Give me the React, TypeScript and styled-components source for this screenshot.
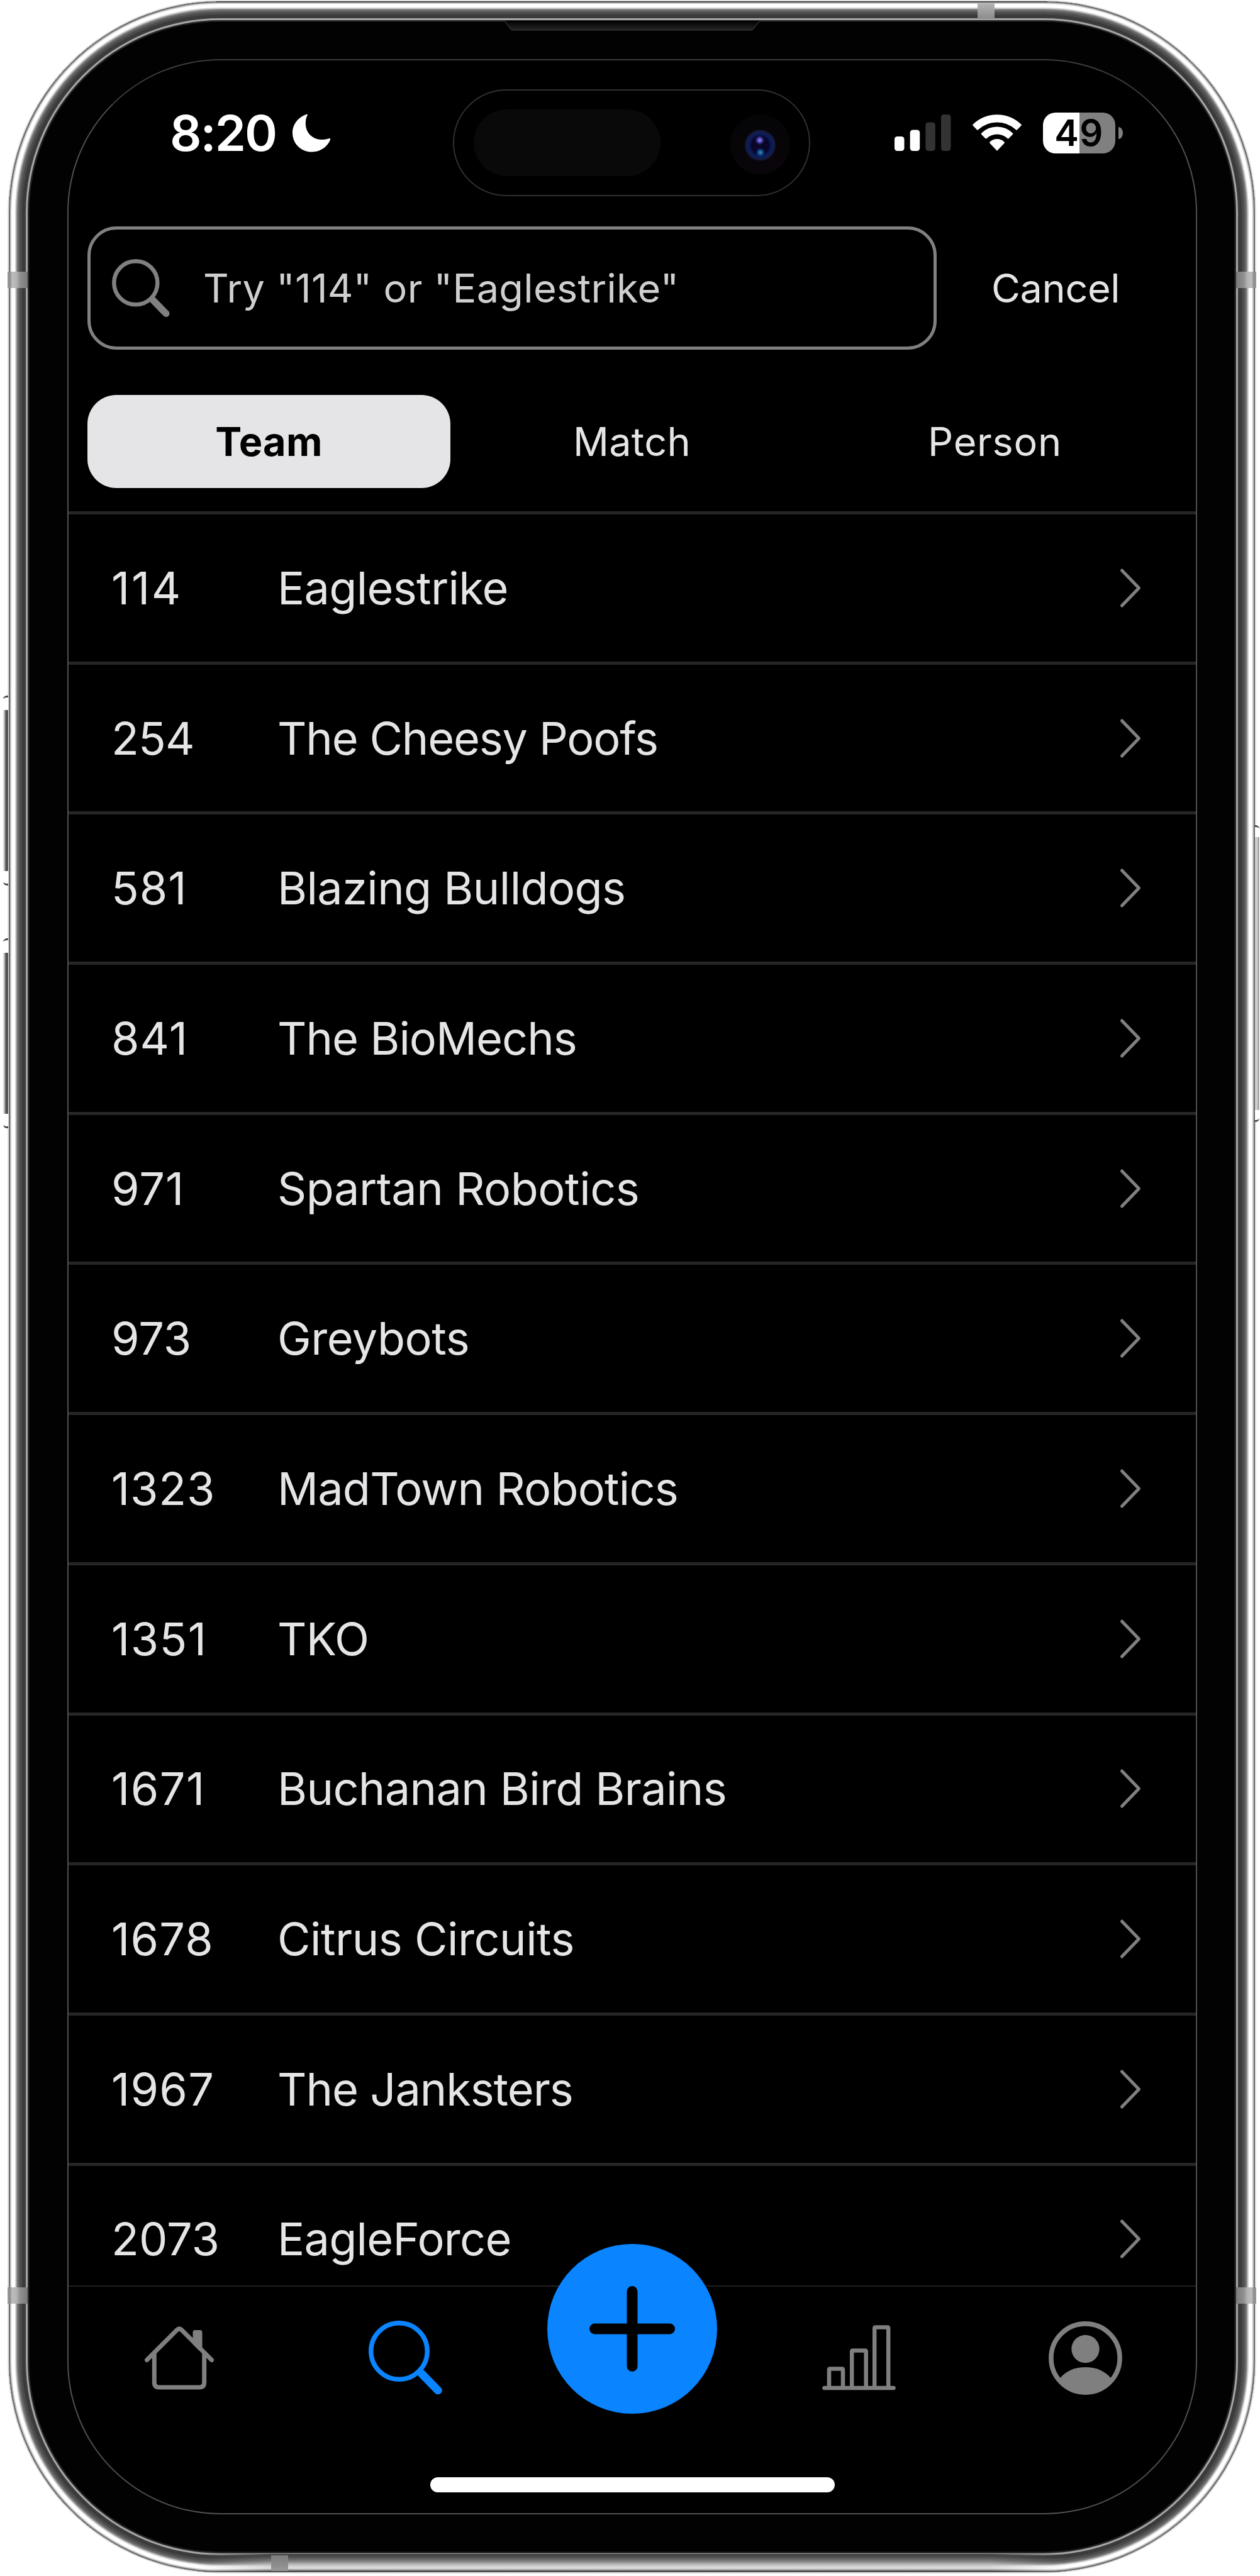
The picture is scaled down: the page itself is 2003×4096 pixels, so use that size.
import React from 'react';
import styled, { createGlobalStyle, css } from 'styled-components';

const GlobalStyle = createGlobalStyle`
  *, *::before, *::after { box-sizing: border-box; }
  body {
    margin: 0;
    background: #fff;
    font-family: Inter, "Liberation Sans", sans-serif;
  }
`;

const ink = '#e5e5e7';
const muted = '#808080';
const hairline = '#262628';
const accent = '#0a84ff';

/* ---------- Device ---------- */

const Page = styled.div`
  width: 2003px;
  height: 4096px;
  padding: 2px 8px 6px 14px;
  overflow: hidden;
  background: #fff;
`;

const Device = styled.div`
  position: relative;
  width: 1981px;
  height: 4088px;
  padding: 92px 92px 92px 93px;
  border-radius: 336px;
  background: #020202;
  box-shadow:
    0 0 0 2px #e2e2e2,
    inset 0 0 0 2px #6a6a6a,
    inset 0 0 0 4px #c6c6c6,
    inset 0 0 0 10px #ffffff,
    inset 0 0 0 12px #cfcfcf,
    inset 0 0 0 14px #8a8a8a,
    inset 0 0 0 17px #646464,
    inset 0 0 0 21px #4c4c4c,
    inset 0 0 0 27px #3b3b3b,
    inset 0 0 0 30px #a6a6a6,
    inset 0 0 0 32px #2a2a2a,
    inset 0 0 0 33px #141414;
`;

const BottomShade = styled.div`
  position: absolute;
  left: 300px;
  right: 300px;
  bottom: 0;
  height: 29px;
  background: linear-gradient(to bottom, #3a3a3a 0, #505050 5px, #7c7c7c 11px, #b4b4b4 16px, #d6d6d6 20px, #dcdcdc 23px, #8a8a8a 26px, #4c4c4c 27px, #4c4c4c 29px);
  mask-image: linear-gradient(to right, transparent, #000 120px, #000 calc(100% - 120px), transparent);
`;

const TopShade = styled.div`
  position: absolute;
  left: 330px;
  right: 330px;
  top: 0;
  height: 2px;
  background: #444;
`;

const SideBand = styled.div<{ $side: 'left' | 'right'; $top: number }>`
  position: absolute;
  ${(p) => (p.$side === 'left' ? 'left: -2px;' : 'right: -2px;')}
  top: ${(p) => p.$top}px;
  width: 32px;
  height: 26px;
  background: linear-gradient(
    to ${(p) => (p.$side === 'left' ? 'right' : 'left')},
    #9a9a9a 0, #8c8c8c 4px, #bdbdbd 7px, #b4b4b4 14px, #8f8f8f 20px, #7a7a7a 100%
  );
`;

const EdgeBand = styled.div<{ $edge: 'top' | 'bottom'; $left: number }>`
  position: absolute;
  ${(p) => (p.$edge === 'top' ? 'top: 3px;' : 'bottom: 2px;')}
  left: ${(p) => p.$left}px;
  width: 27px;
  height: 25px;
  background: ${(p) => (p.$edge === 'top' ? 'linear-gradient(#b4b4b4, #8c8c8c)' : 'linear-gradient(#7c7c7c, #989898)')};
`;

const SideButton = styled.div<{ $side: 'left' | 'right'; $top: number; $height: number }>`
  position: absolute;
  top: ${(p) => p.$top}px;
  height: ${(p) => p.$height}px;
  border-top: 3px solid #4a4a4a;
  border-bottom: 3px solid #4a4a4a;
  ${(p) =>
    p.$side === 'left'
      ? css`
          left: -9px;
          width: 8px;
          border-radius: 6px 0 0 6px;
          background: linear-gradient(to right, #e2e2e2 0, #c4c4c4 2px, #5a5a5a 4px, #484848 7px, #8a8a8a 8px) 0 20px / 100% calc(100% - 40px) no-repeat, #fff;
        `
      : css`
          right: -7px;
          width: 7px;
          border-radius: 0 6px 6px 0;
          background: linear-gradient(to left, #d8d8d8 0, #9a9a9a 1px, #9a9a9a 2px, #cfcfcf 3px, #cfcfcf 7px) 0 16px / 100% calc(100% - 32px) no-repeat, #fff;
        `}
`;

const Speaker = styled.svg`
  position: absolute;
  top: 31px;
  left: 787px;
  width: 408px;
  height: 17px;
  display: block;
`;

/* ---------- Screen ---------- */

const Screen = styled.main`
  display: flex;
  flex-direction: column;
  width: 1796px;
  height: 3904px;
  overflow: hidden;
  border: 2px solid #505050;
  border-top-color: #3c3c3c;
  border-radius: 243px;
  background: #000;
  color: ${ink};
`;

const StatusBar = styled.header`
  display: grid;
  grid-template-columns: 611px 568px 1fr;
  align-items: start;
  flex: none;
  height: 264px;
  padding-top: 46px;
`;

const Clock = styled.div`
  display: flex;
  align-items: center;
  gap: 26px;
  height: 138px;
  padding-left: 161px;
  color: #fff;
  font-size: 79px;
  font-weight: 600;
  letter-spacing: -2px;
  line-height: 1;
`;

const Island = styled.div`
  display: flex;
  align-items: center;
  justify-content: space-between;
  height: 170px;
  padding: 0 30px 0 31px;
  border: 2px solid #303030;
  border-radius: 85px;
  background: #000;
`;

const Sensor = styled.div`
  width: 297px;
  height: 106px;
  border-radius: 53px;
  background: #090909;
`;

const StatusIcons = styled.div`
  display: flex;
  align-items: center;
  gap: 34px;
  height: 138px;
  padding-left: 134px;
`;

const Battery = styled.div`
  display: flex;
  align-items: center;
  gap: 5px;
`;

const BatteryBody = styled.div`
  display: flex;
  align-items: center;
  justify-content: center;
  width: 115px;
  height: 65px;
  border-radius: 20px;
  background: linear-gradient(to right, #fff 50%, #808080 50%);
  color: #000;
  font-size: 58px;
  font-weight: 600;
  letter-spacing: 1.5px;
  line-height: 1;
`;

const BatteryCap = styled.div`
  width: 7px;
  height: 19px;
  border-radius: 0 7px 7px 0 / 0 10px 10px 0;
  background: #808080;
`;

/* ---------- Search ---------- */

const SearchRow = styled.div`
  display: flex;
  flex: none;
  height: 196px;
  padding-left: 30px;
`;

const SearchField = styled.label`
  display: flex;
  align-items: center;
  width: 1350px;
  height: 196px;
  padding-left: 34px;
  border: 5px solid ${muted};
  border-radius: 46px;
`;

const Placeholder = styled.span`
  margin-left: 53px;
  color: #cfcfd1;
  font-size: 63px;
  letter-spacing: 0.33px;
  line-height: 1;
  white-space: nowrap;
`;

const Cancel = styled.button`
  margin: 0 0 0 87px;
  padding: 0;
  border: 0;
  background: none;
  color: ${ink};
  font: 400 63px/1 Inter, "Liberation Sans", sans-serif;
  letter-spacing: -0.4px;
`;

const Segments = styled.nav`
  display: flex;
  flex: none;
  height: 185px;
  margin-top: 72px;
  padding: 0 31px 37px 30px;
`;

const Segment = styled.button<{ $active?: boolean; $tracking: number }>`
  width: 577px;
  height: 148px;
  padding: 0;
  border: 0;
  border-radius: 46px;
  background: ${(p) => (p.$active ? ink : 'transparent')};
  color: ${(p) => (p.$active ? '#000' : ink)};
  font: ${(p) => (p.$active ? 700 : 400)} 63px/1 Inter, "Liberation Sans", sans-serif;
  letter-spacing: ${(p) => p.$tracking}px;
`;

/* ---------- Team list ---------- */

const TeamList = styled.ul`
  flex: 1;
  min-height: 0;
  margin: 0;
  padding: 0;
  overflow: hidden;
  list-style: none;
`;

const TeamRow = styled.li`
  display: grid;
  grid-template-columns: 264px 1fr 32px;
  align-items: center;
  height: 238.7px;
  padding: 0 88px 0 68px;
  border-top: 5px solid ${hairline};
  font-size: 72px;
  line-height: 1;
  white-space: nowrap;
`;

const Cell = styled.span<{ $tracking: number }>`
  letter-spacing: ${(p) => p.$tracking}px;
`;

/* ---------- Tab bar ---------- */

const TabBar = styled.footer`
  display: flex;
  flex-direction: column;
  align-items: center;
  flex: none;
  height: 362px;
  border-top: 2px solid #1f1f20;
`;

const Tabs = styled.nav`
  display: grid;
  grid-template-columns: repeat(5, 360px);
  justify-content: center;
  align-items: center;
  justify-items: center;
  width: 1792px;
  height: 226px;
`;

const AddButton = styled.button`
  display: grid;
  place-items: center;
  align-self: start;
  width: 270px;
  height: 270px;
  margin: -68px 0 0;
  padding: 0;
  border: 0;
  border-radius: 50%;
  background: ${accent};
`;

const HomeIndicator = styled.div`
  flex: none;
  width: 643px;
  height: 24px;
  margin-top: 77px;
  border-radius: 12px;
  background: #fff;
`;

const Icon = styled.svg`
  display: block;
  flex: none;
  fill: none;
  overflow: visible;
`;

/* ---------- Icons ---------- */

const MoonIcon = () => (
  <Icon width="61" height="61" viewBox="0 0 61 61">
    <path
      d="M22.6 .8C9.400 5 0 16.500 0 30.400C0 47.200 13.600 60.500 30.500 60.500C44 60.500 55.500 52.500 60 41.200C60.500 39.800 59.500 38.800 58 39.200C54.500 40.300 50.500 41 46.500 41C32 41 20.800 30 20.800 15.500C20.800 10.500 21.700 6 23.600 2.600C24.300 1.200 23.800 .4 22.600 .8Z"
      fill="#fff"
    />
  </Icon>
);

const SignalIcon = () => (
  <Icon width="90" height="58" viewBox="0 0 90 58">
    <rect x="0" y="35" width="15.500" height="23" rx="4.500" fill="#fff" />
    <rect x="24.700" y="24.500" width="15.500" height="33.500" rx="4.500" fill="#fff" />
    <rect x="49.300" y="12.500" width="15.500" height="45.500" rx="4.500" fill="#333" />
    <rect x="74" y="0" width="15.500" height="58" rx="4.500" fill="#333" />
  </Icon>
);

const WifiIcon = () => (
  <Icon width="78" height="58" viewBox="0 0 78 58">
    <g stroke="#fff" strokeWidth="3" strokeLinejoin="round" fill="#fff">
      <path d="M1.700 16.800A53.500 53.500 0 0 1 76.300 16.800L70 23.100A45.500 45.500 0 0 0 8 23.100Z" />
      <path d="M15.200 30.800A34 34 0 0 1 62.800 30.800L56.600 37A25.500 25.500 0 0 0 21.400 37Z" />
      <path d="M28.600 44.800A15 15 0 0 1 49.400 44.800L39 55.800Z" />
    </g>
  </Icon>
);

const CameraLens = () => (
  <Icon width="95" height="96" viewBox="0 0 95 96">
    <defs>
      <radialGradient id="lens">
        <stop offset="0" stopColor="#0a0622" />
        <stop offset=".55" stopColor="#08062a" />
        <stop offset=".72" stopColor="#0a1d5c" />
        <stop offset=".9" stopColor="#161c42" />
        <stop offset="1" stopColor="#0a0c1c" />
      </radialGradient>
      <radialGradient id="glintTop">
        <stop offset="0" stopColor="#8f8bf5" />
        <stop offset=".5" stopColor="#4a3fa8" />
        <stop offset="1" stopColor="#1a1450" stopOpacity="0" />
      </radialGradient>
      <radialGradient id="glintBottom">
        <stop offset="0" stopColor="#3f8aa8" />
        <stop offset=".5" stopColor="#0f4a8c" />
        <stop offset="1" stopColor="#0a1450" stopOpacity="0" />
      </radialGradient>
      <linearGradient id="rim" x1="0" y1="0" x2="0" y2="1">
        <stop offset="0" stopColor="#040405" />
        <stop offset="1" stopColor="#0a050b" />
      </linearGradient>
    </defs>
    <circle cx="47.500" cy="50.500" r="47.500" fill="url(#rim)" />
    <circle cx="47.500" cy="52" r="25" fill="url(#lens)" />
    <circle cx="46.800" cy="44" r="8" fill="url(#glintTop)" />
    <circle cx="47.800" cy="63.500" r="8" fill="url(#glintBottom)" />
  </Icon>
);

const SearchIcon = ({ size, color, ring, handle }: { size: number; color: string; ring: number; handle: number }) => (
  <Icon width={size} height={size} viewBox="0 0 92 92" stroke={color}>
    <circle cx="37.800" cy="37.800" r={37.8 - ring / 2} strokeWidth={ring} />
    <path d="M65.500 65.500L86 86.500" strokeWidth={handle} strokeLinecap="round" />
    <path d="M62 62L70 70" strokeWidth={handle * 0.75} />
  </Icon>
);

const ChevronIcon = () => (
  <Icon width="32" height="62" viewBox="0 0 32 62" stroke={muted} strokeWidth="5" strokeLinecap="round" strokeLinejoin="round">
    <path d="M2.500 3L29.500 31L2.500 59" />
  </Icon>
);

const HomeIcon = () => (
  <Icon width="110" height="118" viewBox="0 0 110 118" stroke="#7f7f7f" strokeWidth="7" strokeLinecap="round" strokeLinejoin="round">
    <path d="M3.500 62.500L51 15Q55 11 59 15L106.500 62.500" />
    <path d="M15.300 53V98Q15.300 106 23.300 106H86.700Q94.700 106 94.700 98V53" />
    <path d="M80 18.500H88V44L80 36Z" fill="#7f7f7f" />
  </Icon>
);

const PlusIcon = () => (
  <Icon width="136" height="136" viewBox="0 0 136 136" stroke="#000" strokeWidth="17" strokeLinecap="round">
    <path d="M68 8.500V127.500M8.500 68H127.500" />
  </Icon>
);

const ChartIcon = () => (
  <Icon width="117" height="104" viewBox="0 0 117 104" stroke="#7f7f7f" strokeWidth="6.500" strokeLinecap="round" strokeLinejoin="round">
    <path d="M3.500 100H113.500" />
    <path d="M11 99V71Q11 69.500 12.500 69.500H31.500Q33 69.500 33 71V99" />
    <path d="M47.200 99V42Q47.200 40.500 48.700 40.500H68.200Q69.700 40.500 69.700 42V99" />
    <path d="M83.200 99V5Q83.200 3.500 84.700 3.500H103.700Q105.200 3.500 105.200 5V99" />
  </Icon>
);

const ProfileIcon = () => (
  <Icon width="117" height="117" viewBox="0 0 117 117">
    <circle cx="58.500" cy="58.500" r="54.600" stroke="#7f7f7f" strokeWidth="7.600" />
    <circle cx="58.500" cy="44" r="22.200" fill="#7f7f7f" />
    <path d="M18 90.500C28 78.500 42 73 58.500 73C75 73 89 78.500 99 90.500A50.500 50.500 0 0 1 18 90.500Z" fill="#7f7f7f" />
  </Icon>
);

/* ---------- App ---------- */

type Team = { number: string; name: string; numberTracking: number; nameTracking: number };

const teams: Team[] = [
  { number: '114', name: 'Eaglestrike', numberTracking: 2.6, nameTracking: -0.7 },
  { number: '254', name: 'The Cheesy Poofs', numberTracking: -0.8, nameTracking: -1.2 },
  { number: '581', name: 'Blazing Bulldogs', numberTracking: 1, nameTracking: -0.6 },
  { number: '841', name: 'The BioMechs', numberTracking: 1, nameTracking: -1 },
  { number: '971', name: 'Spartan Robotics', numberTracking: 1, nameTracking: -0.45 },
  { number: '973', name: 'Greybots', numberTracking: 0, nameTracking: -0.5 },
  { number: '1323', name: 'MadTown Robotics', numberTracking: 0.8, nameTracking: -0.8 },
  { number: '1351', name: 'TKO', numberTracking: 1.4, nameTracking: -0.7 },
  { number: '1671', name: 'Buchanan Bird Brains', numberTracking: 1.4, nameTracking: -0.65 },
  { number: '1678', name: 'Citrus Circuits', numberTracking: 1.2, nameTracking: -0.5 },
  { number: '1967', name: 'The Janksters', numberTracking: 1.2, nameTracking: -1 },
  { number: '2073', name: 'EagleForce', numberTracking: 0, nameTracking: -0.75 },
];

export default function App() {
  return (
    <Page>
      <GlobalStyle />
      <Device>
        <SideButton $side="left" $top={1104} $height={302} />
        <SideButton $side="left" $top={1490} $height={302} />
        <SideButton $side="right" $top={1310} $height={472} />
        <BottomShade />
        <TopShade />
        <SideBand $side="left" $top={430} />
        <SideBand $side="right" $top={430} />
        <SideBand $side="left" $top={3635} />
        <SideBand $side="right" $top={3635} />
        <EdgeBand $edge="top" $left={1540} />
        <EdgeBand $edge="bottom" $left={417} />
        <Speaker viewBox="0 0 408 17">
          <defs>
            <linearGradient id="speaker" x1="0" y1="0" x2="0" y2="1">
              <stop offset="0" stopColor="#000" />
              <stop offset="1" stopColor="#262626" />
            </linearGradient>
          </defs>
          <path d="M1 0L10 12Q12 15 16 15H391Q395 15 397 12L407 0" fill="url(#speaker)" stroke="#2c2c2c" strokeWidth="1.500" />
        </Speaker>

        <Screen>
          <StatusBar>
            <Clock>
              8:20
              <MoonIcon />
            </Clock>
            <Island>
              <Sensor />
              <CameraLens />
            </Island>
            <StatusIcons>
              <SignalIcon />
              <WifiIcon />
              <Battery>
                <BatteryBody>49</BatteryBody>
                <BatteryCap />
              </Battery>
            </StatusIcons>
          </StatusBar>

          <SearchRow>
            <SearchField>
              <SearchIcon size={92} color={muted} ring={6.5} handle={11} />
              <Placeholder>Try "114" or "Eaglestrike"</Placeholder>
            </SearchField>
            <Cancel>Cancel</Cancel>
          </SearchRow>

          <Segments>
            <Segment $active $tracking={0.3}>Team</Segment>
            <Segment $tracking={0.3}>Match</Segment>
            <Segment $tracking={0.7}>Person</Segment>
          </Segments>

          <TeamList>
            {teams.map((team) => (
              <TeamRow key={team.number}>
                <Cell $tracking={team.numberTracking}>{team.number}</Cell>
                <Cell $tracking={team.nameTracking}>{team.name}</Cell>
                <ChevronIcon />
              </TeamRow>
            ))}
          </TeamList>

          <TabBar>
            <Tabs>
              <HomeIcon />
              <SearchIcon size={118} color={accent} ring={5.8} handle={10} />
              <AddButton>
                <PlusIcon />
              </AddButton>
              <ChartIcon />
              <ProfileIcon />
            </Tabs>
            <HomeIndicator />
          </TabBar>
        </Screen>
      </Device>
    </Page>
  );
}
